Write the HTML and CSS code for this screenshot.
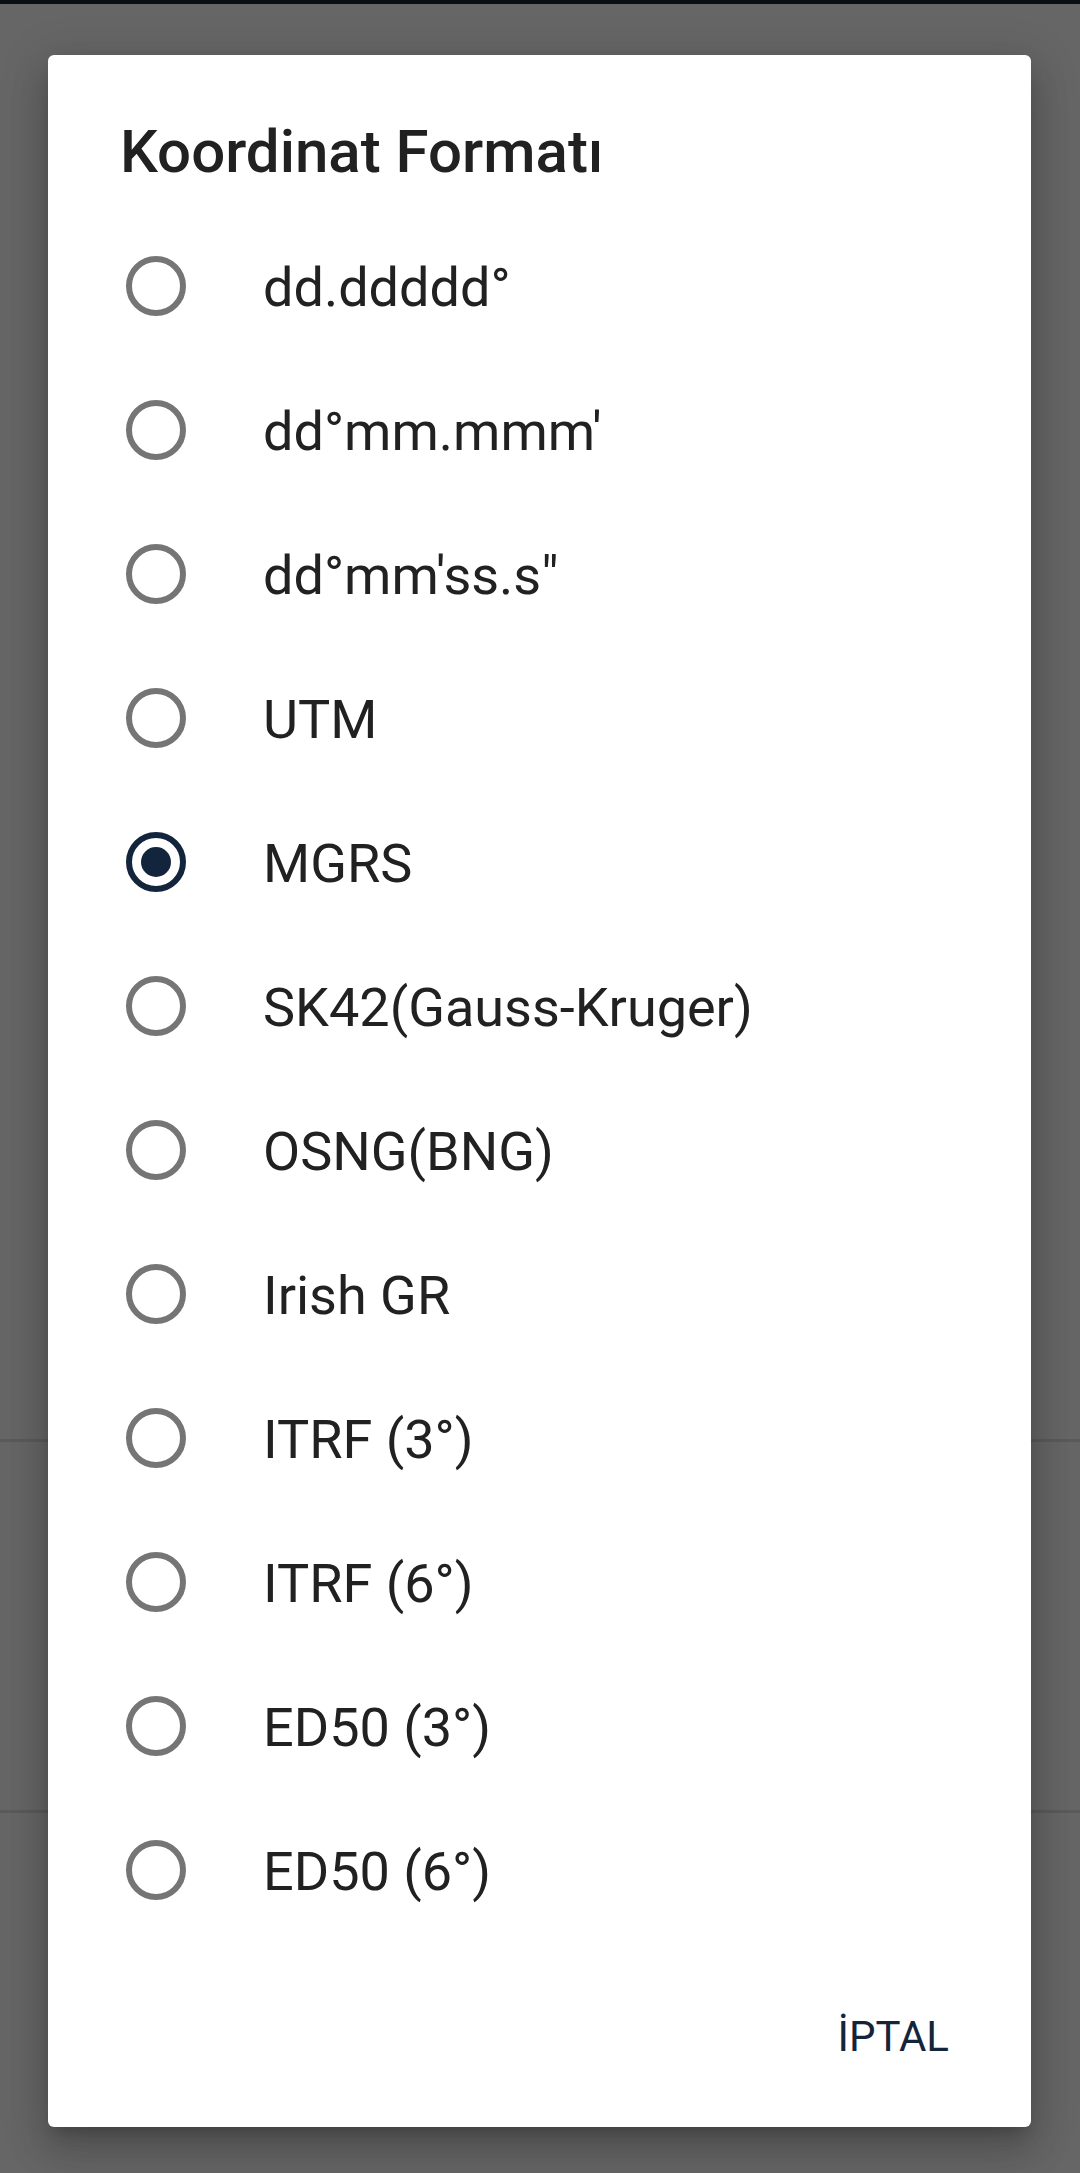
FILE: index.html
```html
<!DOCTYPE html>
<html lang="tr">
<head>
<meta charset="utf-8">
<title>Koordinat Formatı</title>
<link rel="stylesheet" href="styles.css">
</head>
<body>
<div class="statusbar"></div>
<div class="dialog">
  <h1 class="title">Koordinat Formatı</h1>
  <ul class="options">
    <li class="option"><span class="radio"></span><span class="label">dd.ddddd°</span></li>
    <li class="option"><span class="radio"></span><span class="label">dd°mm.mmm'</span></li>
    <li class="option"><span class="radio"></span><span class="label">dd°mm'ss.s"</span></li>
    <li class="option"><span class="radio"></span><span class="label">UTM</span></li>
    <li class="option"><span class="radio checked"></span><span class="label">MGRS</span></li>
    <li class="option"><span class="radio"></span><span class="label">SK42(Gauss-Kruger)</span></li>
    <li class="option"><span class="radio"></span><span class="label">OSNG(BNG)</span></li>
    <li class="option"><span class="radio"></span><span class="label">Irish GR</span></li>
    <li class="option"><span class="radio"></span><span class="label">ITRF (3°)</span></li>
    <li class="option"><span class="radio"></span><span class="label">ITRF (6°)</span></li>
    <li class="option"><span class="radio"></span><span class="label">ED50 (3°)</span></li>
    <li class="option"><span class="radio"></span><span class="label">ED50 (6°)</span></li>
  </ul>
  <div class="actions"><span class="button">İPTAL</span></div>
</div>
</body>
</html>
```
FILE: styles.css
```css
html, body {
  margin: 0;
  padding: 0;
}
body {
  width: 1080px;
  height: 2173px;
  overflow: hidden;
  font-family: Roboto, "Noto Sans", "Liberation Sans", sans-serif;
  background-color: #666666;
  background-image: linear-gradient(to bottom,
    transparent 1439px, #5b5b5b 1439px, #5b5b5b 1442px, transparent 1442px,
    transparent 1810px, #5b5b5b 1810px, #5b5b5b 1813px, transparent 1813px);
}
.statusbar {
  height: 4px;
  background: #0a0f14;
}
.dialog {
  margin: 51px 0 0 48px;
  width: 983px;
  height: 2072px;
  box-sizing: border-box;
  background: #ffffff;
  border-radius: 6px;
  padding-top: 62px;
  box-shadow: 0 24px 38px 3px rgba(0,0,0,0.14), 0 9px 46px 8px rgba(0,0,0,0.12), 0 11px 15px -7px rgba(0,0,0,0.2);
}
.title {
  margin: 0;
  padding-left: 72px;
  font-size: 60px;
  line-height: 70px;
  font-weight: 500;
  color: #212121;
}
.options {
  list-style: none;
  margin: 27px 0 0 0;
  padding: 0;
}
.option {
  height: 144px;
  display: flex;
  align-items: center;
  padding-left: 78px;
}
.radio {
  width: 60px;
  height: 60px;
  box-sizing: border-box;
  border: 6px solid #757575;
  border-radius: 50%;
  display: flex;
  align-items: center;
  justify-content: center;
  flex: none;
}
.radio.checked {
  border-color: #13253d;
}
.radio.checked::after {
  content: "";
  width: 30px;
  height: 30px;
  border-radius: 50%;
  background: #13253d;
}
.label {
  margin-left: 77px;
  padding-top: 3px;
  font-size: 54px;
  line-height: 64px;
  color: #212121;
}
.actions {
  display: flex;
  justify-content: flex-end;
  padding: 71px 82px 0 0;
}
.button {
  font-size: 42px;
  line-height: 48px;
  color: #14243a;
}
```
